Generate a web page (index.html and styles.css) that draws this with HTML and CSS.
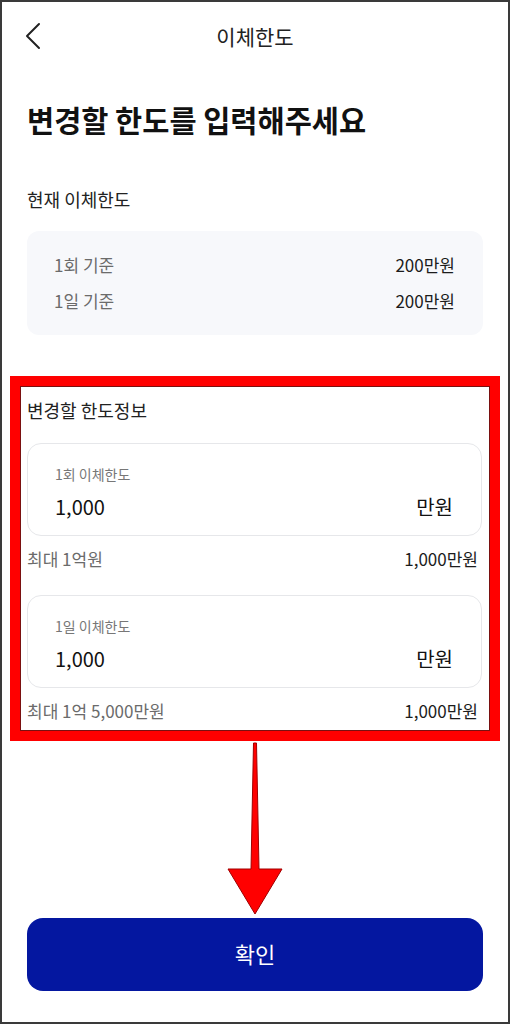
FILE: index.html
```html
<!DOCTYPE html>
<html>
<head>
    <meta charset="utf-8">
    <title>이체한도</title>
    <link rel="stylesheet" href="styles.css">
</head>
<body>
    <div class="screen">
        <header class="topbar">
            <svg class="back" width="16" height="28" viewBox="0 0 16 28">
                <path d="M14 2 L2 14 L14 26" fill="none" stroke="#222" stroke-width="2" stroke-linecap="round" stroke-linejoin="round"/>
            </svg>
            <span class="title">이체한도</span>
            <span></span>
        </header>

        <h1 class="heading">변경할 한도를 입력해주세요</h1>

        <p class="section-label">현재 이체한도</p>
        <div class="current-box">
            <div class="current-row">
                <span class="muted">1회 기준</span>
                <span>200만원</span>
            </div>
            <div class="current-row">
                <span class="muted">1일 기준</span>
                <span>200만원</span>
            </div>
        </div>

        <div class="highlight">
            <p class="section-label">변경할 한도정보</p>

            <div class="limit-card">
                <span class="card-label">1회 이체한도</span>
                <div class="card-value">
                    <span>1,000</span>
                    <span>만원</span>
                </div>
            </div>
            <div class="limit-note">
                <span class="muted">최대 1억원</span>
                <span>1,000만원</span>
            </div>

            <div class="limit-card second">
                <span class="card-label">1일 이체한도</span>
                <div class="card-value">
                    <span>1,000</span>
                    <span>만원</span>
                </div>
            </div>
            <div class="limit-note">
                <span class="muted">최대 1억 5,000만원</span>
                <span>1,000만원</span>
            </div>
        </div>

        <svg class="arrow" width="56" height="175" viewBox="0 0 56 175">
            <polygon points="26.5,2 29.5,2 32,128 55,128 28,173 1,128 24,128" fill="#ff0000" stroke="#a00000" stroke-width="1" stroke-linejoin="round"/>
        </svg>

        <button class="confirm-btn">확인</button>
    </div>
</body>
</html>
```

FILE: styles.css
```css
body {
    margin: 0;
    font-family: "Noto Sans CJK KR", "Noto Sans", sans-serif;
    color: #1c1c1c;
    background: #fff;
}

.screen {
    width: 510px;
    height: 1024px;
    box-sizing: border-box;
    border: 2px solid #3a3a3a;
    overflow: hidden;
}

.topbar {
    display: grid;
    grid-template-columns: 1fr auto 1fr;
    align-items: center;
    height: 68px;
    padding: 0 23px;
}

.back {
    display: block;
}

.title {
    font-size: 21px;
    color: #222;
}

.heading {
    margin: 31px 0 0 25px;
    font-size: 29.5px;
    line-height: 36px;
    font-weight: 700;
    color: #111;
}

.section-label {
    margin: 50px 0 0 25px;
    font-size: 18px;
    line-height: 24px;
    color: #222;
}

.muted {
    color: #6b6b6b;
}

.current-box {
    margin: 20px 25px 0 25px;
    padding: 22px 28px 22px 27px;
    background: #f7f8fb;
    border-radius: 12px;
    display: flex;
    flex-direction: column;
    gap: 12px;
}

.current-row {
    display: flex;
    justify-content: space-between;
    font-size: 17px;
    line-height: 24px;
}

.highlight {
    margin: 41px 8px 0 8px;
    border: 10px solid #ff0000;
    padding: 12px 8px 9px 7px;
    box-shadow: inset 0 0 0 1px #7a1010;
}

.highlight .section-label {
    margin: 0;
}

.limit-card {
    margin-top: 21px;
    border: 1px solid #e6e7ea;
    border-radius: 14px;
    padding: 20px 28px 14px 27px;
    display: flex;
    flex-direction: column;
    gap: 9px;
}

.limit-card.second {
    margin-top: 25px;
}

.card-label {
    font-size: 14px;
    line-height: 20px;
    color: #777;
}

.card-value {
    display: flex;
    justify-content: space-between;
    font-size: 20px;
    line-height: 28px;
    color: #111;
}

.limit-note {
    margin-top: 12px;
    display: flex;
    justify-content: space-between;
    font-size: 17px;
    line-height: 22px;
    padding-right: 4px;
}

.arrow {
    display: block;
    margin: 0 auto;
}

.confirm-btn {
    display: block;
    margin: 2px 25px 0 25px;
    width: 456px;
    height: 73px;
    border: none;
    border-radius: 16px;
    background: #0417a0;
    color: #fff;
    font-family: inherit;
    font-size: 22px;
    padding-bottom: 4px;
}
```
